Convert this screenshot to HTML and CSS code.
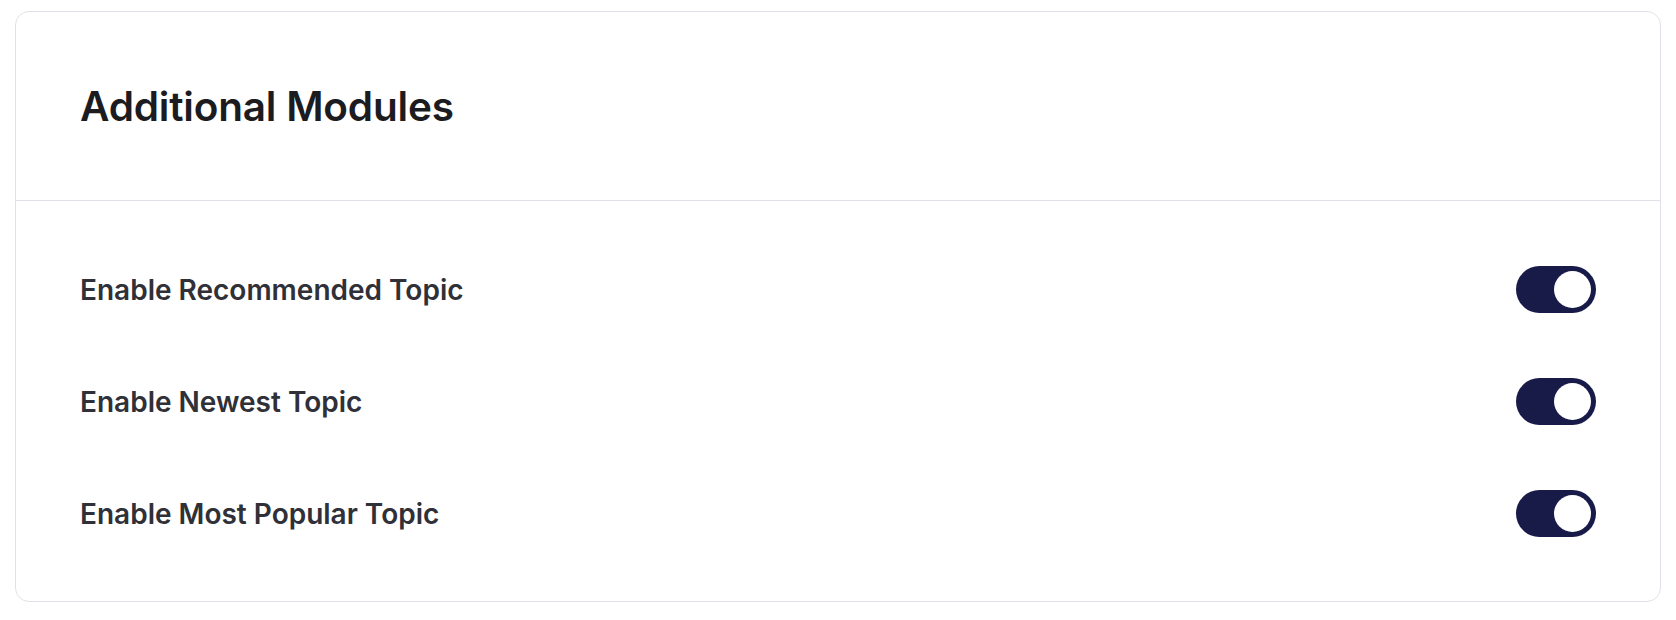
FILE: index.html
```html
<!DOCTYPE html>
<html lang="en">
<head>
<meta charset="utf-8">
<title>Additional Modules</title>
<link rel="stylesheet" href="styles.css">
</head>
<body>
<section class="card">
  <header class="card-header">
    <h2 class="card-title">Additional Modules</h2>
  </header>
  <div class="card-body">
    <div class="row">
      <span class="label">Enable Recommended Topic</span>
      <span class="toggle"><span class="knob"></span></span>
    </div>
    <div class="row">
      <span class="label">Enable Newest Topic</span>
      <span class="toggle"><span class="knob"></span></span>
    </div>
    <div class="row">
      <span class="label">Enable Most Popular Topic</span>
      <span class="toggle"><span class="knob"></span></span>
    </div>
  </div>
</section>
</body>
</html>
```

FILE: styles.css
```css
* { box-sizing: border-box; }
html, body { background: #ffffff; }
body {
  margin: 11px 15px 0 15px;
  font-family: Inter, "Noto Sans", sans-serif;
}
.card {
  border: 1.5px solid #e1e1e9;
  border-radius: 14px;
  background: #fff;
}
.card-header {
  height: 189px;
  padding: 0 64px;
  display: flex;
  align-items: center;
  border-bottom: 1.5px solid #e1e1e9;
}
.card-title {
  margin: 0;
  font-size: 40.5px;
  font-weight: 600;
  color: #1b1b20;
  letter-spacing: -0.2px;
}
.card-body {
  padding: 65px 64px 64px 64px;
  display: flex;
  flex-direction: column;
  gap: 65px;
}
.row {
  height: 47px;
  display: flex;
  align-items: center;
  justify-content: space-between;
}
.label {
  font-size: 28px;
  font-weight: 600;
  color: #303038;
}
.toggle {
  width: 80px;
  height: 47px;
  border-radius: 24px;
  background: #181a48;
  display: flex;
  align-items: center;
  justify-content: flex-end;
  padding-right: 5px;
}
.knob {
  width: 37px;
  height: 37px;
  border-radius: 50%;
  background: #ffffff;
}
```
